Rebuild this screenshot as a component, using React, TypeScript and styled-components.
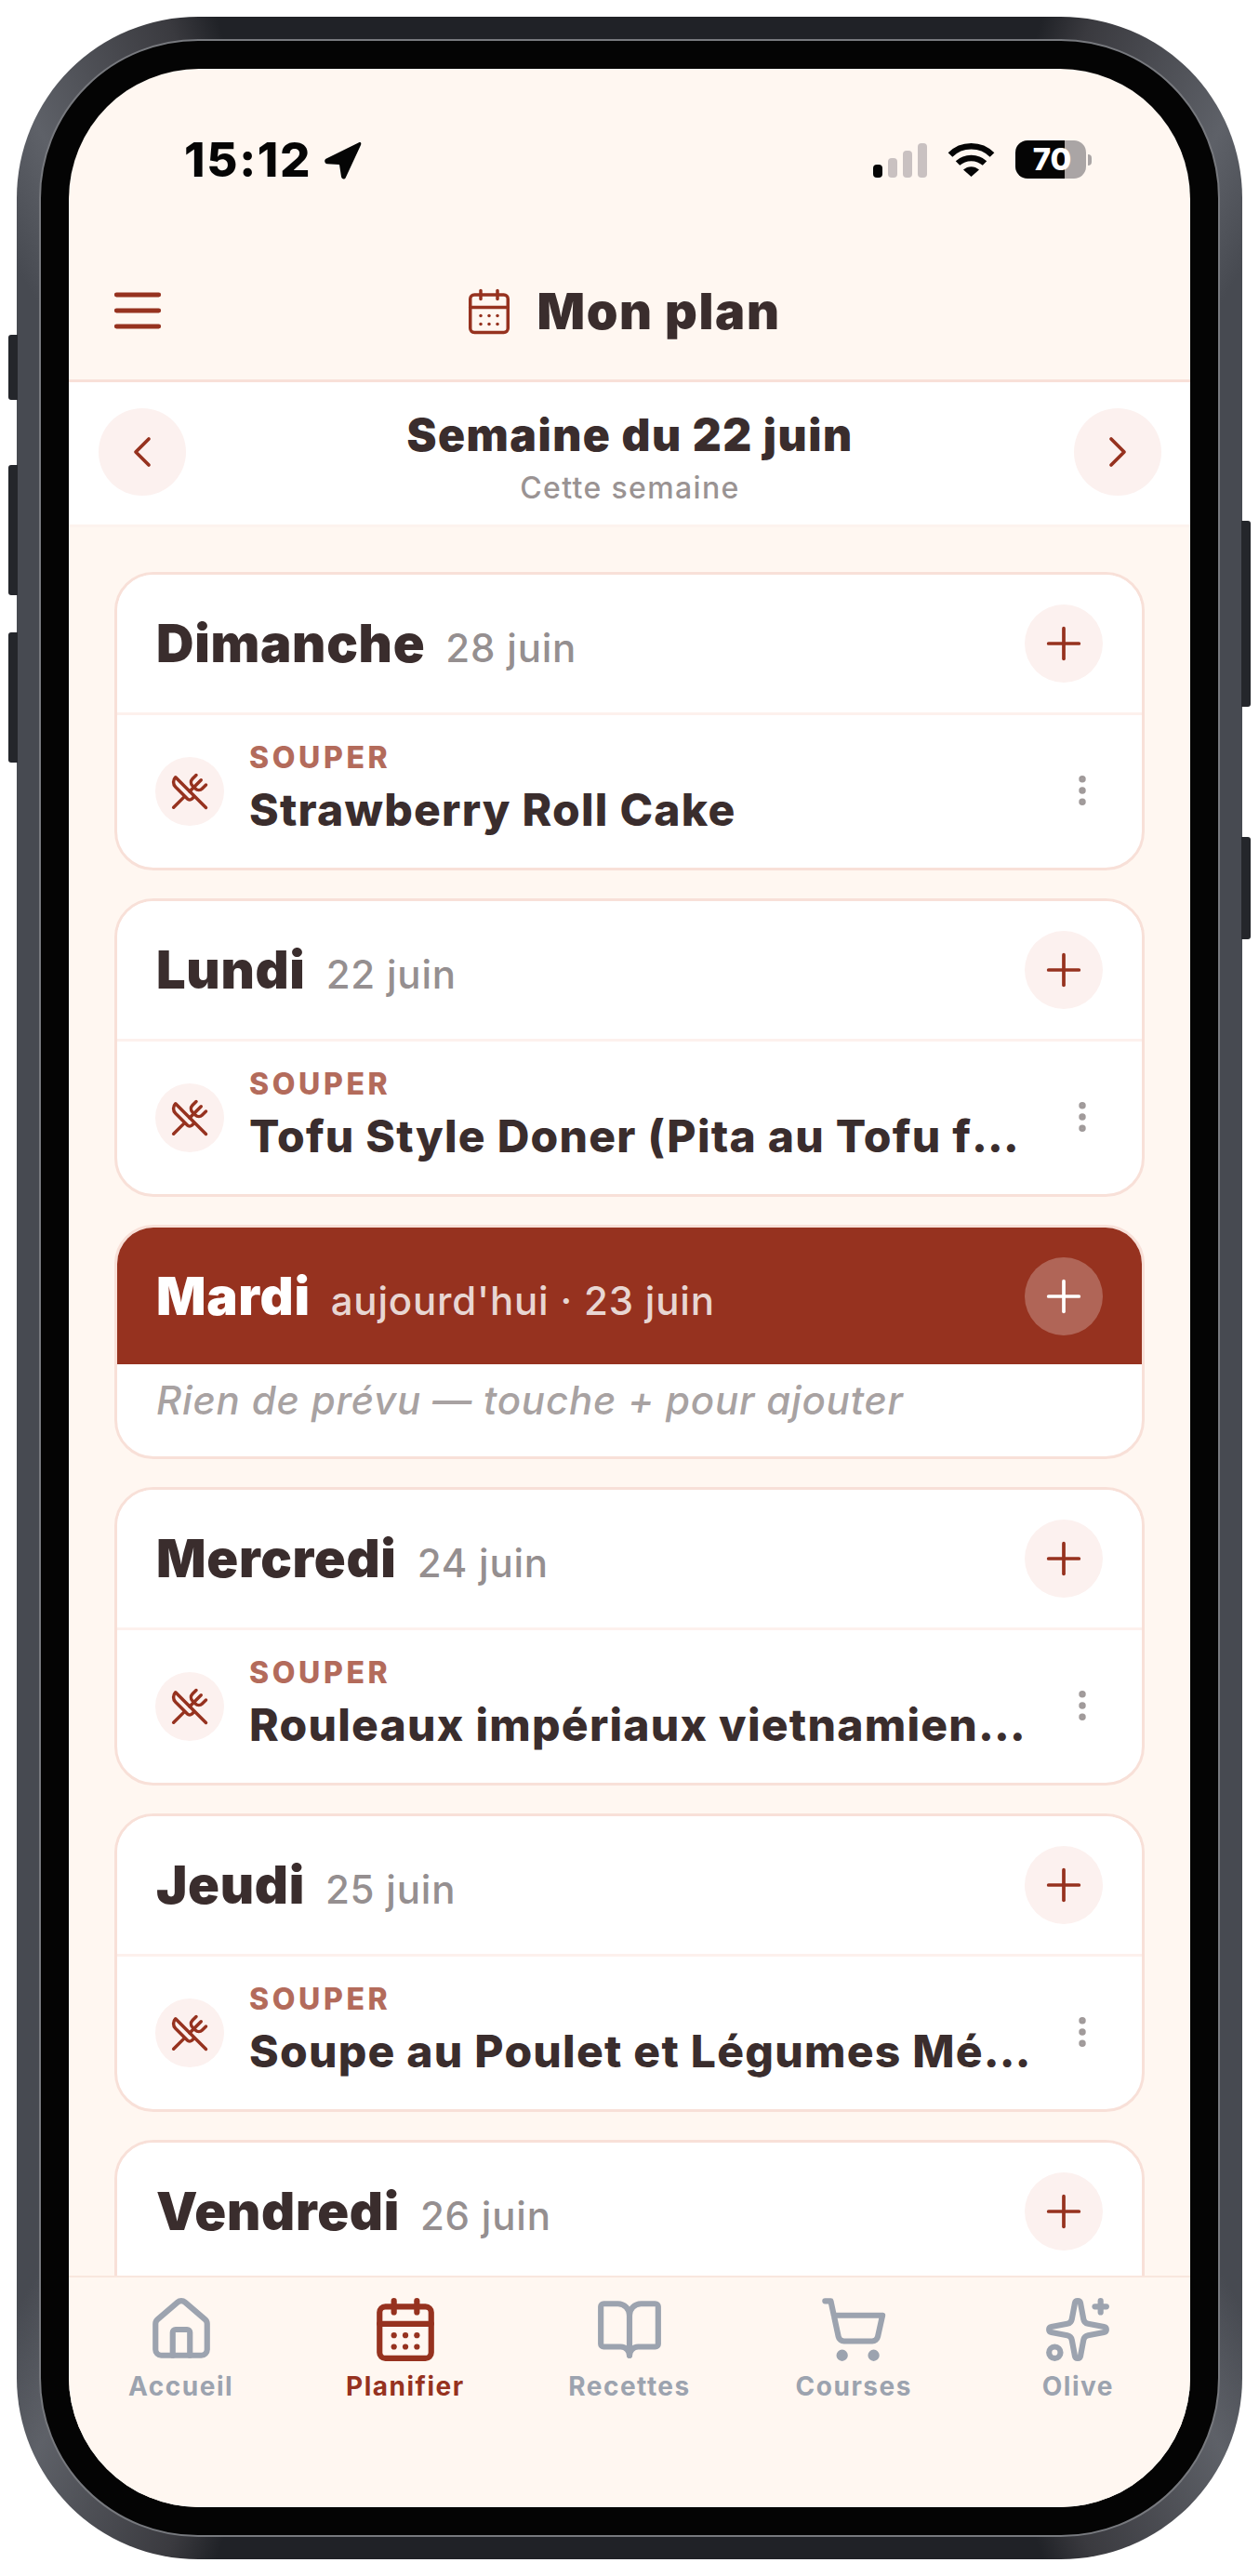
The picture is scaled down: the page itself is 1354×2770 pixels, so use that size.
import styled, { createGlobalStyle } from 'styled-components';
import {
  BookOpen,
  CalendarDays,
  ChevronLeft,
  ChevronRight,
  EllipsisVertical,
  House,
  Plus,
  ShoppingCart,
  Sparkles,
  UtensilsCrossed,
} from 'lucide-react';

const brick = '#96321f';
const ink = '#3a2d2d';
const cream = '#fff7f1';
const blush = '#fcf1ef';
const line = '#f8e0d8';

const GlobalStyle = createGlobalStyle`
  html, body {
    margin: 0;
    padding: 0;
    background: #fff;
    font-family: "Inter", "Liberation Sans", sans-serif;
  }
  * { box-sizing: border-box; }
`;

const Page = styled.div`
  width: 1354px;
  height: 2770px;
  padding: 18px;
`;

const Bezel = styled.div`
  position: relative;
  width: 1318px;
  height: 2734px;
  padding: 24px;
  border-radius: 195px;
  background: conic-gradient(
    #202227 0deg 18deg, #3a3a3f 20deg, #5e6168 27deg, #474a51 31deg,
    #474a51 149deg, #5e6168 153deg, #3a3a3f 160deg, #202227 162deg,
    #202227 198deg, #3a3a3f 200deg, #5e6168 207deg, #474a51 211deg,
    #474a51 329deg, #5e6168 333deg, #3a3a3f 340deg, #202227 342deg
  );
`;

const SideKey = styled.div<{ $side: 'left' | 'right'; $top: number; $height: number }>`
  position: absolute;
  top: ${(p) => p.$top}px;
  ${(p) => p.$side}: -9px;
  width: 10px;
  height: ${(p) => p.$height}px;
  background: #24262b;
  border-radius: ${(p) => (p.$side === 'left' ? '3px 0 0 3px' : '0 3px 3px 0')};
`;

const BlackRim = styled.div`
  width: 100%;
  height: 100%;
  padding: 30px;
  background: #040404;
  border: 2px solid #77797e;
  border-radius: 171px;
`;

const Screen = styled.div`
  width: 100%;
  height: 100%;
  display: flex;
  flex-direction: column;
  overflow: hidden;
  border-radius: 140px;
  background: ${cream};
`;

const StatusBar = styled.div`
  height: 186px;
  flex: none;
  display: flex;
  align-items: flex-start;
  justify-content: space-between;
  padding: 77px 106px 0 124px;
`;

const Clock = styled.div`
  display: flex;
  align-items: center;
  gap: 13px;
  font-size: 51px;
  line-height: 42px;
  font-weight: 800;
  letter-spacing: 1.7px;
  color: #050505;
`;

const StatusIcons = styled.div`
  display: flex;
  align-items: center;
  gap: 22px;
`;

const Signal = styled.div`
  display: flex;
  align-items: flex-end;
  gap: 6px;
  height: 37px;
  margin-top: 2px;
`;

const SignalBar = styled.span<{ $height: number; $on?: boolean }>`
  width: 10px;
  height: ${(p) => p.$height}px;
  border-radius: 4px;
  background: ${(p) => (p.$on ? '#050505' : '#c9c1c1')};
`;

const Battery = styled.div`
  display: flex;
  align-items: center;
  gap: 2px;
`;

const BatteryBody = styled.div`
  width: 76px;
  height: 41px;
  border-radius: 13px;
  background: linear-gradient(to right, #050505 70%, #aaa5a5 70%);
  color: #fff;
  font-size: 33px;
  line-height: 41px;
  font-weight: 800;
  text-align: center;
  padding-left: 3px;
`;

const BatteryTip = styled.span`
  width: 4px;
  height: 12px;
  border-radius: 0 6px 6px 0;
  background: #aaa5a5;
`;

const TopBar = styled.header`
  height: 151px;
  flex: none;
  display: grid;
  grid-template-columns: 1fr auto 1fr;
  align-items: center;
  padding: 0 55px 0 40px;
  border-bottom: 3px solid ${line};
`;

const PageTitle = styled.h1`
  display: flex;
  align-items: center;
  gap: 24px;
  margin: 0;
  padding-top: 2px;
  font-size: 54px;
  line-height: 64px;
  font-weight: 900;
  letter-spacing: 1.6px;
  color: ${ink};
`;

const WeekBar = styled.div`
  height: 156px;
  flex: none;
  display: flex;
  align-items: center;
  justify-content: space-between;
  padding: 0 31px 3px 32px;
  background: #fff;
  border-bottom: 3px solid #fdf3ee;
`;

const RoundButton = styled.button<{ $size: number; $onBrick?: boolean }>`
  width: ${(p) => p.$size}px;
  height: ${(p) => p.$size}px;
  flex: none;
  display: flex;
  align-items: center;
  justify-content: center;
  padding: 0;
  border: 0;
  border-radius: 50%;
  background: ${(p) => (p.$onBrick ? 'rgba(255, 255, 255, 0.25)' : blush)};
  color: ${(p) => (p.$onBrick ? '#fff' : brick)};
`;

const WeekLabel = styled.div`
  padding-top: 10px;
  text-align: center;
`;

const WeekTitle = styled.div`
  font-size: 48px;
  line-height: 58px;
  font-weight: 900;
  letter-spacing: 1.5px;
  color: ${ink};
`;

const WeekHint = styled.div`
  margin-top: 9px;
  font-size: 32px;
  line-height: 38px;
  font-weight: 500;
  letter-spacing: 1.35px;
  color: #9a9393;
`;

const DayList = styled.main`
  flex: 1;
  min-height: 0;
  overflow: hidden;
  display: flex;
  flex-direction: column;
  gap: 30px;
  padding: 48px 49px 0;
`;

const DayCard = styled.section`
  flex: none;
  overflow: hidden;
  background: #fff;
  border: 3px solid ${line};
  border-radius: 42px;
`;

const DayHead = styled.div<{ $today?: boolean }>`
  height: ${(p) => (p.$today ? 147 : 148)}px;
  display: flex;
  align-items: center;
  justify-content: space-between;
  padding: 0 42px;
  background: ${(p) => (p.$today ? brick : '#fff')};
`;

const DayLabel = styled.div`
  display: flex;
  align-items: baseline;
  gap: 22px;
`;

const DayName = styled.span<{ $today?: boolean }>`
  font-size: 56px;
  font-weight: 900;
  letter-spacing: 0.7px;
  color: ${(p) => (p.$today ? '#fff' : ink)};
`;

const DayDate = styled.span<{ $today?: boolean }>`
  font-size: 42px;
  font-weight: 500;
  letter-spacing: 0.8px;
  color: ${(p) => (p.$today ? '#e8d6d2' : '#958f90')};
`;

const MealRow = styled.div`
  height: 167px;
  display: flex;
  align-items: center;
  padding: 0 0 0 41px;
  border-top: 3px solid #fdf1ed;
`;

const MealBadge = styled.div`
  width: 74px;
  height: 74px;
  flex: none;
  display: flex;
  align-items: center;
  justify-content: center;
  border-radius: 50%;
  background: ${blush};
  color: ${brick};
`;

const MealText = styled.div`
  flex: 1;
  min-width: 0;
  margin-left: 27px;
`;

const MealType = styled.div`
  margin-top: -6px;
  margin-bottom: 8px;
  font-size: 32px;
  line-height: 38px;
  font-weight: 800;
  letter-spacing: 3.6px;
  color: #b36b5b;
`;

const MealName = styled.div`
  font-size: 48px;
  line-height: 58px;
  font-weight: 800;
  letter-spacing: 1.25px;
  color: ${ink};
  white-space: nowrap;
  overflow: hidden;
  text-overflow: ellipsis;
`;

const MealMenu = styled.div`
  width: 105px;
  flex: none;
  display: flex;
  justify-content: center;
  margin: 0 12px 2px 0;
  color: #a09a9a;
`;

const EmptyDay = styled.div`
  height: 99px;
  padding: 0 42px;
  font-size: 42px;
  line-height: 78px;
  font-style: italic;
  font-weight: 500;
  letter-spacing: 0.8px;
  color: #a8a2a2;
`;

const TabBar = styled.nav`
  height: 249px;
  flex: none;
  display: grid;
  grid-template-columns: repeat(5, 1fr);
  padding-top: 19px;
  background: ${cream};
  border-top: 2px solid #f9e7de;
`;

const Tab = styled.div<{ $active?: boolean }>`
  display: flex;
  flex-direction: column;
  align-items: center;
  color: ${(p) => (p.$active ? brick : '#9ca3af')};
`;

const TabLabel = styled.span`
  font-size: 28px;
  line-height: 34px;
  font-weight: 700;
  letter-spacing: 1.5px;
  margin-top: 7px;
`;

function LocationArrow() {
  return (
    <svg width="41" height="41" viewBox="0 0 41 41" fill="#050505">
      <path d="M37.5 1.5 3 18.5C0 20 1 24 4 24.3l13 .7 2 13c.5 3 4 3.5 5 .5L40 4c1-2.5-.5-3.5-2.5-2.5Z" />
    </svg>
  );
}

function WifiGlyph() {
  return (
    <svg width="51" height="37" viewBox="0 0 51 37" fill="none" stroke="#050505" strokeWidth="6.5">
      <path d="M3 13.5C15 1 36 1 48 13.5" />
      <path d="M11 22.5c8-7.5 21-7.5 29 0" />
      <path d="M17 29.5c5-4.5 12-4.5 17 0l-8.500 7.500Z" fill="#050505" stroke="none" />
    </svg>
  );
}

function MenuGlyph() {
  return (
    <svg width="68" height="68" viewBox="0 0 24 24" fill="none" stroke={brick} strokeWidth="1.75" strokeLinecap="round">
      <path d="M4 6h16M4 12h16M4 18h16" />
    </svg>
  );
}

type Day = { name: string; date: string; meal?: string; today?: boolean };

const days: Day[] = [
  { name: 'Dimanche', date: '28 juin', meal: 'Strawberry Roll Cake' },
  { name: 'Lundi', date: '22 juin', meal: 'Tofu Style Doner (Pita au Tofu frit)' },
  { name: 'Mardi', date: "aujourd'hui · 23 juin", today: true },
  { name: 'Mercredi', date: '24 juin', meal: 'Rouleaux impériaux vietnamiens au poulet' },
  { name: 'Jeudi', date: '25 juin', meal: 'Soupe au Poulet et Légumes Méditerranéens' },
  { name: 'Vendredi', date: '26 juin', meal: 'Salade de pois chiches' },
];

const tabs = [
  { label: 'Accueil', Icon: House },
  { label: 'Planifier', Icon: CalendarDays, active: true },
  { label: 'Recettes', Icon: BookOpen },
  { label: 'Courses', Icon: ShoppingCart },
  { label: 'Olive', Icon: Sparkles },
];

export default function App() {
  return (
    <Page>
      <GlobalStyle />
      <Bezel>
        <SideKey $side="left" $top={342} $height={70} />
        <SideKey $side="left" $top={482} $height={140} />
        <SideKey $side="left" $top={662} $height={140} />
        <SideKey $side="right" $top={542} $height={200} />
        <SideKey $side="right" $top={882} $height={110} />
        <BlackRim>
          <Screen>
            <StatusBar>
              <Clock>
                15:12
                <LocationArrow />
              </Clock>
              <StatusIcons>
                <Signal>
                  <SignalBar $height={14} $on />
                  <SignalBar $height={21} />
                  <SignalBar $height={29} />
                  <SignalBar $height={37} />
                </Signal>
                <WifiGlyph />
                <Battery>
                  <BatteryBody>70</BatteryBody>
                  <BatteryTip />
                </Battery>
              </StatusIcons>
            </StatusBar>

            <TopBar>
              <MenuGlyph />
              <PageTitle>
                <CalendarDays size={54} strokeWidth={1.55} color={brick} />
                Mon plan
              </PageTitle>
            </TopBar>

            <WeekBar>
              <RoundButton $size={94}>
                <ChevronLeft size={56} strokeWidth={1.6} />
              </RoundButton>
              <WeekLabel>
                <WeekTitle>Semaine du 22 juin</WeekTitle>
                <WeekHint>Cette semaine</WeekHint>
              </WeekLabel>
              <RoundButton $size={94}>
                <ChevronRight size={56} strokeWidth={1.6} />
              </RoundButton>
            </WeekBar>

            <DayList>
              {days.map((day) => (
                <DayCard key={day.name}>
                  <DayHead $today={day.today}>
                    <DayLabel>
                      <DayName $today={day.today}>{day.name}</DayName>
                      <DayDate $today={day.today}>{day.date}</DayDate>
                    </DayLabel>
                    <RoundButton $size={84} $onBrick={day.today}>
                      <Plus size={56} strokeWidth={1.6} />
                    </RoundButton>
                  </DayHead>
                  {day.meal ? (
                    <MealRow>
                      <MealBadge>
                        <UtensilsCrossed size={42} strokeWidth={2} />
                      </MealBadge>
                      <MealText>
                        <MealType>SOUPER</MealType>
                        <MealName>{day.meal}</MealName>
                      </MealText>
                      <MealMenu>
                        <EllipsisVertical size={42} strokeWidth={2.25} />
                      </MealMenu>
                    </MealRow>
                  ) : (
                    <EmptyDay>Rien de prévu — touche + pour ajouter</EmptyDay>
                  )}
                </DayCard>
              ))}
            </DayList>

            <TabBar>
              {tabs.map(({ label, Icon, active }) => (
                <Tab key={label} $active={active}>
                  <Icon size={74} strokeWidth={2} />
                  <TabLabel>{label}</TabLabel>
                </Tab>
              ))}
            </TabBar>
          </Screen>
        </BlackRim>
      </Bezel>
    </Page>
  );
}
